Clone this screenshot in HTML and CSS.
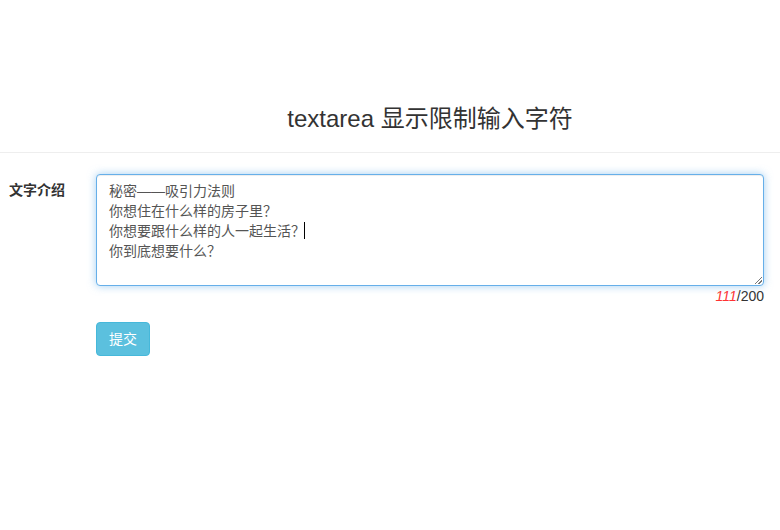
FILE: index.html
```html
<!DOCTYPE html>
<html lang="zh-CN">
<head>
<meta charset="utf-8">
<title>textarea 显示限制输入字符</title>
<link rel="stylesheet" href="styles.css">
</head>
<body>
<header class="page-header">
  <h3 class="title">textarea 显示限制输入字符</h3>
</header>
<form class="form">
  <div class="row">
    <label class="label">文字介绍</label>
    <div class="field">
      <div class="textarea" role="textbox" aria-multiline="true">秘密——吸引力法则
你想住在什么样的房子里？
你想要跟什么样的人一起生活？<span class="caret"></span>
你到底想要什么？</div>
      <div class="counter"><em class="count">111</em>/200</div>
    </div>
  </div>
  <div class="actions">
    <button type="button" class="btn">提交</button>
  </div>
</form>
</body>
</html>
```
FILE: styles.css
```css
html, body {
  margin: 0;
  padding: 0;
  background: #fff;
}
body {
  font-family: "Liberation Sans", "Noto Sans CJK SC", sans-serif;
  font-size: 14px;
  line-height: 20px;
  color: #333;
}
.page-header {
  padding: 104px 0 18px 80px;
  border-bottom: 1px solid #eee;
  text-align: center;
}
.title {
  margin: 0;
  font-size: 24px;
  line-height: 30px;
  font-weight: normal;
  color: #333;
}
.form {
  padding-top: 21px;
}
.row {
  display: flex;
}
.label {
  width: 87px;
  padding: 6px 0 0 9px;
  font-weight: bold;
  color: #333;
}
.field {
  flex: 1;
  margin-right: 16px;
}
.textarea {
  position: relative;
  box-sizing: border-box;
  height: 112px;
  padding: 6px 12px;
  border: 1px solid #66afe9;
  border-radius: 4px;
  box-shadow: inset 0 1px 1px rgba(0,0,0,.075), 0 0 8px rgba(102,175,233,.6);
  color: #555;
  white-space: pre-line;
  background: #fff;
}
.textarea::after {
  content: "";
  position: absolute;
  right: 1px;
  bottom: 1px;
  width: 7px;
  height: 7px;
  background: linear-gradient(135deg, transparent 0 45%, #777 45% 55%, transparent 55% 70%, #777 70% 80%, transparent 80%);
}
.caret {
  display: inline-block;
  width: 1px;
  height: 17px;
  margin-left: -1px;
  vertical-align: -3px;
  background: #000;
}
.counter {
  text-align: right;
  color: #333;
}
.count {
  color: #f33;
  font-style: italic;
}
.actions {
  padding: 16px 0 0 96px;
}
.btn {
  padding: 6px 12px;
  font-family: "Liberation Sans", "Noto Sans CJK SC", sans-serif;
  font-size: 14px;
  line-height: 20px;
  color: #fff;
  background: #5bc0de;
  border: 1px solid #46b8da;
  border-radius: 4px;
  cursor: pointer;
}
```
